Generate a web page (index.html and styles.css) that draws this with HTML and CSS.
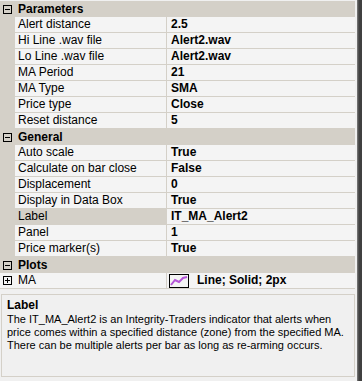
FILE: index.html
```html
<!DOCTYPE html>
<html lang="en">
<head>
  <meta charset="UTF-8" />
  <title>Indicator Properties</title>
  <link rel="stylesheet" href="styles.css">
</head>
<body>

<div class="frame">
  <div class="main">

    <div class="grid">
      <div class="cat">
        <svg class="box" width="9" height="9" viewBox="0 0 9 9"><rect x="0.5" y="0.5" width="8" height="8" fill="none" stroke="#000"/><path d="M2 4.5h5" stroke="#000"/></svg>
        Parameters
      </div>
      <div class="row"><div class="name">Alert distance</div><div class="value">2.5</div></div>
      <div class="row"><div class="name">Hi Line .wav file</div><div class="value">Alert2.wav</div></div>
      <div class="row"><div class="name">Lo Line .wav file</div><div class="value">Alert2.wav</div></div>
      <div class="row"><div class="name">MA Period</div><div class="value">21</div></div>
      <div class="row"><div class="name">MA Type</div><div class="value">SMA</div></div>
      <div class="row"><div class="name">Price type</div><div class="value">Close</div></div>
      <div class="row"><div class="name">Reset distance</div><div class="value">5</div></div>

      <div class="cat">
        <svg class="box" width="9" height="9" viewBox="0 0 9 9"><rect x="0.5" y="0.5" width="8" height="8" fill="none" stroke="#000"/><path d="M2 4.5h5" stroke="#000"/></svg>
        General
      </div>
      <div class="row"><div class="name">Auto scale</div><div class="value">True</div></div>
      <div class="row"><div class="name">Calculate on bar close</div><div class="value">False</div></div>
      <div class="row"><div class="name">Displacement</div><div class="value">0</div></div>
      <div class="row"><div class="name">Display in Data Box</div><div class="value">True</div></div>
      <div class="row selected"><div class="name">Label</div><div class="value">IT_MA_Alert2</div></div>
      <div class="row"><div class="name">Panel</div><div class="value">1</div></div>
      <div class="row"><div class="name">Price marker(s)</div><div class="value">True</div></div>

      <div class="cat">
        <svg class="box" width="9" height="9" viewBox="0 0 9 9"><rect x="0.5" y="0.5" width="8" height="8" fill="none" stroke="#000"/><path d="M2 4.5h5" stroke="#000"/></svg>
        Plots
      </div>
      <div class="row expandable">
        <div class="gutter">
          <svg class="box" width="9" height="9" viewBox="0 0 9 9"><rect x="0.5" y="0.5" width="8" height="8" fill="none" stroke="#000"/><path d="M2 4.5h5M4.5 2v5" stroke="#000"/></svg>
        </div>
        <div class="name">MA</div>
        <div class="value">
          <svg class="swatch" width="20" height="14" viewBox="0 0 20 14">
            <rect x="0.5" y="0.5" width="19" height="13" fill="#f4f4f4" stroke="#000"/>
            <polyline points="2,11 6,6 10,8 14,4 18,3" fill="none" stroke="#b455d8" stroke-width="2"/>
          </svg>
          Line; Solid; 2px
        </div>
      </div>
    </div>

    <div class="help">
      <div class="help-title">Label</div>
      <p>The IT_MA_Alert2 is an Integrity-Traders indicator that alerts when price comes within a specified distance (zone) from the specified MA. There can be multiple alerts per bar as long as re-arming occurs.</p>
    </div>

  </div>
  <div class="edge"></div>
</div>

</body>
</html>
```

FILE: styles.css
```css
html, body { margin: 0; padding: 0; }
body { font-family: 'Liberation Sans', Arial, sans-serif; font-size: 11px; color: #000; background: #f0f0f0; }

.frame { display: flex; width: 362px; height: 381px; }
.main { width: 355px; display: flex; flex-direction: column; }
.edge { width: 7px; background: linear-gradient(to right, #f0f0f0 0, #f0f0f0 2px, #808080 2px, #404040 4px, #404040 100%); }

.grid { padding-top: 1px; font-size: 12px; }
.cat { height: 16px; line-height: 16px; background: #d4d0c8; font-weight: bold; display: flex; align-items: center; gap: 6px; padding-left: 3px; }

.box { display: block; }

.row { display: flex; height: 15px; border-bottom: 1px solid #d4d0c8; padding-left: 15px; background: #d4d0c8; }
.row .name { width: 148px; padding-left: 3px; background: #f4f4f4; border-right: 1px solid #d4d0c8; line-height: 15px; white-space: nowrap; overflow: hidden; }
.row .value { flex: 1; padding-left: 4px; background: #f4f4f4; font-weight: bold; line-height: 15px; display: flex; align-items: center; gap: 8px; }
.row.selected .name { background: #d4d0c8; }

.row.expandable { padding-left: 0; }
.row.expandable .gutter { width: 12px; padding-left: 3px; display: flex; align-items: center; background: #f4f4f4; }
.row.expandable .value { padding-left: 2px; }
.swatch { display: block; }

.help { margin: 5px 0 0 1px; border: 1px solid #d4d0c8; padding: 4px 5px; box-sizing: border-box; height: 83px; }
.help-title { font-weight: bold; font-size: 12px; line-height: 13px; }
.help p { margin: 1px 0 0; line-height: 13px; }
```
